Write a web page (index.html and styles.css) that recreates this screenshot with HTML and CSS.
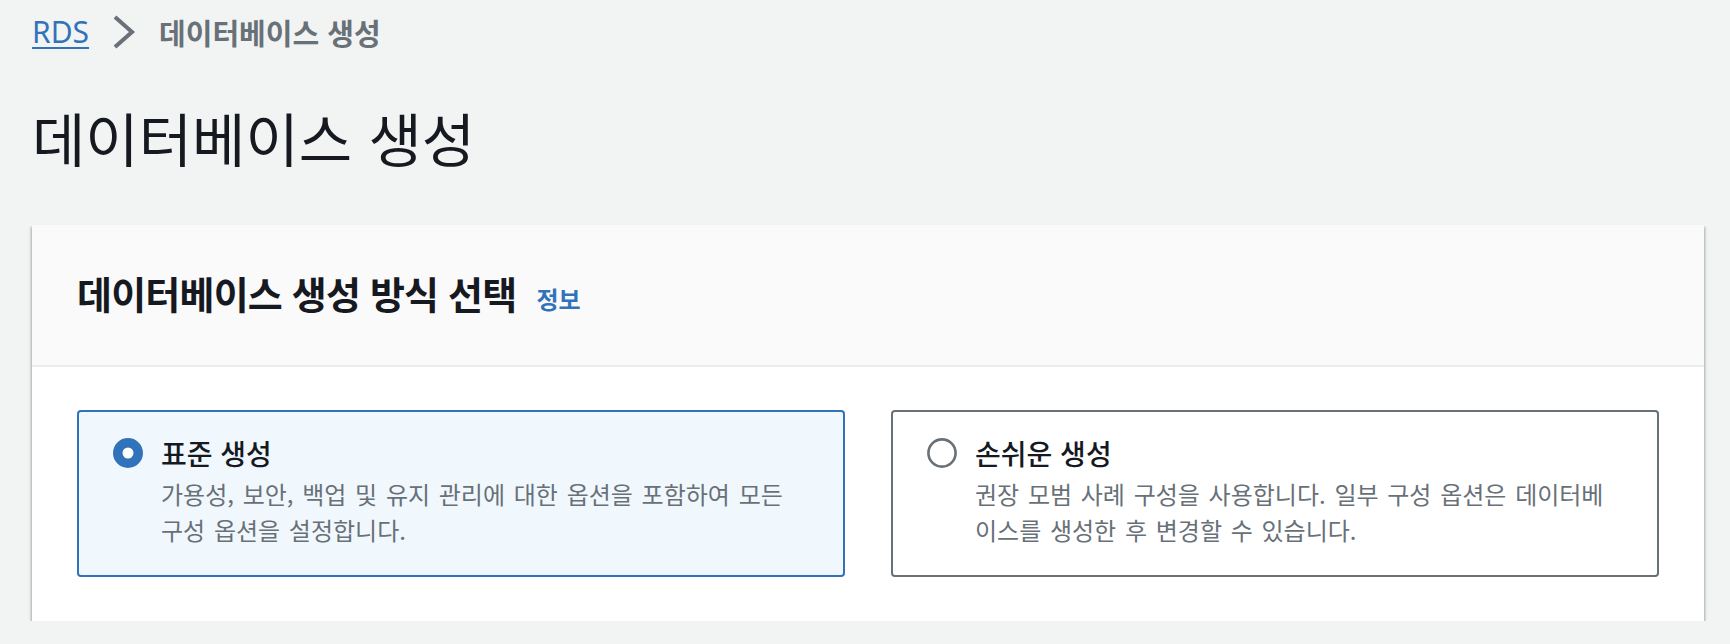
FILE: index.html
```html
<!DOCTYPE html>
<html lang="ko">
<head>
<meta charset="utf-8">
<title>데이터베이스 생성</title>
<link rel="stylesheet" href="styles.css">
</head>
<body>
<div class="page">
  <nav class="breadcrumbs">
    <a class="crumb-link" href="#">RDS</a>
    <svg class="crumb-sep" width="24" height="36" viewBox="0 0 24 36"><polyline points="3,3 20,18 3,33" fill="none" stroke="#687078" stroke-width="4"/></svg>
    <span class="crumb-current">데이터베이스 생성</span>
  </nav>
  <h1 class="page-title">데이터베이스 생성</h1>
  <section class="panel">
    <header class="panel-header">
      <h2 class="panel-title">데이터베이스 생성 방식 선택</h2>
      <a class="info-link" href="#">정보</a>
    </header>
    <div class="panel-body">
      <div class="tiles">
        <div class="tile tile-selected">
          <svg class="radio" width="30" height="30" viewBox="0 0 30 30"><circle cx="15" cy="15" r="10.25" fill="#ffffff" stroke="#3173ba" stroke-width="9.5"/></svg>
          <div class="tile-text">
            <div class="tile-label">표준 생성</div>
            <div class="tile-desc">가용성, 보안, 백업 및 유지 관리에 대한 옵션을 포함하여 모든 구성 옵션을 설정합니다.</div>
          </div>
        </div>
        <div class="tile">
          <svg class="radio" width="30" height="30" viewBox="0 0 30 30"><circle cx="15" cy="15" r="13.6" fill="#ffffff" stroke="#687078" stroke-width="2.6"/></svg>
          <div class="tile-text">
            <div class="tile-label">손쉬운 생성</div>
            <div class="tile-desc">권장 모범 사례 구성을 사용합니다. 일부 구성 옵션은 데이터베이스를 생성한 후 변경할 수 있습니다.</div>
          </div>
        </div>
      </div>
    </div>
  </section>
</div>
</body>
</html>
```

FILE: styles.css
```css
* {
  box-sizing: border-box;
}

html, body {
  margin: 0;
  padding: 0;
  background: #f2f3f3;
}

body {
  font-family: "Noto Sans CJK KR", "Noto Sans", sans-serif;
  color: #16191f;
}

.page {
  padding: 12px 26px 0 32px;
}

.breadcrumbs {
  display: flex;
  align-items: center;
  height: 40px;
}

.crumb-link {
  font-family: "Noto Sans", "Noto Sans CJK KR", sans-serif;
  font-size: 30px;
  line-height: 40px;
  color: #3173ba;
  text-decoration: underline;
  text-decoration-thickness: 2px;
  text-underline-offset: 4px;
}

.crumb-sep {
  margin: 0 23px 0 23px;
  display: block;
}

.crumb-current {
  font-size: 29px;
  font-weight: 700;
  line-height: 40px;
  color: #687078;
}

.page-title {
  margin: 50px 0 0 0;
  font-size: 58px;
  font-weight: 400;
  line-height: 70px;
  color: #16191f;
}

.panel {
  margin-top: 53px;
  background: #ffffff;
  box-shadow: 0 2px 2px rgba(0, 28, 36, 0.35), 2px 2px 2px rgba(0, 28, 36, 0.12), -2px 2px 2px rgba(0, 28, 36, 0.12);
}

.panel-header {
  display: flex;
  align-items: baseline;
  gap: 20px;
  padding: 43px 45px 41px;
  background: #fafafa;
  border-bottom: 2px solid #eaeded;
}

.panel-title {
  margin: 0;
  font-size: 38px;
  font-weight: 700;
  letter-spacing: -0.8px;
  line-height: 50px;
}

.info-link {
  font-size: 24px;
  font-weight: 700;
  color: #3173ba;
  text-decoration: none;
  line-height: 50px;
}

.panel-body {
  padding: 43px 45px 44px;
}

.tiles {
  display: grid;
  grid-template-columns: 1fr 1fr;
  gap: 46px;
}

.tile {
  display: flex;
  align-items: flex-start;
  gap: 18px;
  padding: 23px 37px 27px 34px;
  border: 2px solid #687078;
  border-radius: 4px;
  background: #ffffff;
}

.tile-selected {
  border-color: #3173ba;
  background: #f1f8fd;
}

.radio {
  flex: none;
  display: block;
  margin-top: 3px;
}

.tile-text {
  flex: 1;
  min-width: 0;
}

.tile-label {
  font-size: 28px;
  font-weight: 500;
  line-height: 36px;
  color: #16191f;
}

.tile-desc {
  margin-top: 5px;
  font-size: 24px;
  word-spacing: 2px;
  line-height: 36px;
  color: #687078;
}
```
